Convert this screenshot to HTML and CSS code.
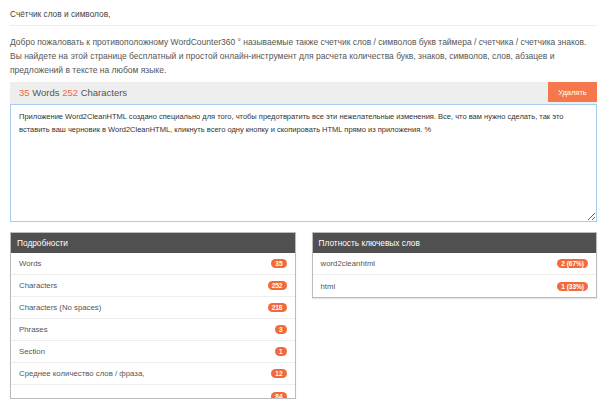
FILE: index.html
```html
<!DOCTYPE html>
<html lang="ru">
<head>
<meta charset="utf-8">
<title>Счётчик слов</title>
<link rel="stylesheet" href="styles.css">
</head>
<body>
<div class="page">
  <h1 class="title">Счётчик слов и символов,</h1>
  <p class="intro">Добро пожаловать к противоположному WordCounter360 ° называемые также счетчик слов / символов букв таймера / счетчика / счетчика знаков. Вы найдете на этой странице бесплатный и простой онлайн-инструмент для расчета количества букв, знаков, символов, слов, абзацев и предложений в тексте на любом языке.</p>
  <div class="bar">
    <div class="count"><span class="num">35</span> Words <span class="num">252</span> Characters</div>
    <button class="clear">Удалять</button>
  </div>
  <textarea class="editor">Приложение Word2CleanHTML создано специально для того, чтобы предотвратить все эти нежелательные изменения. Все, что вам нужно сделать, так это вставить ваш черновик в Word2CleanHTML, кликнуть всего одну кнопку и скопировать HTML прямо из приложения. %</textarea>
  <div class="panels">
    <div class="panel details">
      <div class="panel-head">Подробности</div>
      <ul class="list">
        <li><span>Words</span><span class="badge">35</span></li>
        <li><span>Characters</span><span class="badge">252</span></li>
        <li><span>Characters (No spaces)</span><span class="badge">218</span></li>
        <li><span>Phrases</span><span class="badge">3</span></li>
        <li><span>Section</span><span class="badge">1</span></li>
        <li><span>Среднее количество слов / фраза,</span><span class="badge">12</span></li>
        <li><span></span><span class="badge">84</span></li>
      </ul>
    </div>
    <div class="panel density">
      <div class="panel-head">Плотность ключевых слов</div>
      <ul class="list">
        <li><span>word2cleanhtml</span><span class="badge">2 (67%)</span></li>
        <li><span>html</span><span class="badge">1 (33%)</span></li>
      </ul>
    </div>
  </div>
</div>
</body>
</html>
```
FILE: styles.css
```css
* { box-sizing: border-box; }
html, body { margin: 0; padding: 0; background: #fff; }
body { font-family: "Liberation Sans", Arial, sans-serif; color: #555; }
.page { width: 610px; padding: 0 13px 0 10px; }
.title {
  font-size: 8.3px;
  font-weight: normal;
  color: #444;
  margin: 0;
  padding: 9px 0 6px;
  line-height: 10px;
  border-bottom: 1px solid #eee;
}
.intro {
  font-size: 8.5px;
  line-height: 14px;
  margin: 9px 0 0;
  padding-right: 8px;
  color: #555;
}
.bar {
  margin-top: 5px;
  height: 22px;
  background: #eee;
  display: flex;
  align-items: flex-start;
  justify-content: space-between;
}
.count {
  font-size: 9.5px;
  line-height: 22px;
  padding-left: 9px;
  color: #555;
}
.num { color: #f26a3b; }
.clear {
  border: 0;
  margin: 0;
  height: 20px;
  width: 49px;
  background: #f6774b;
  color: #fff;
  font-family: inherit;
  font-size: 7.5px;
  padding: 0;
}
.editor {
  display: block;
  width: 100%;
  height: 118px;
  margin: 0;
  border: 1px solid #a9ccee;
  padding: 5px 8px;
  font-family: inherit;
  font-size: 7.5px;
  line-height: 13px;
  color: #333;
  resize: vertical;
  outline: none;
}
.panels {
  display: flex;
  gap: 16px;
  margin-top: 10px;
  align-items: flex-start;
}
.panel {
  flex: 1;
  border: 1px solid #bbb;
  box-shadow: 0 1px 1px rgba(0,0,0,0.1);
}
.details { max-height: 167px; overflow: hidden; }
.panel-head {
  background: #505050;
  color: #fff;
  font-size: 8.3px;
  height: 20px;
  line-height: 20px;
  padding-left: 6px;
}
.list { list-style: none; margin: 0; padding: 0; }
.list li {
  height: 22px;
  display: flex;
  align-items: center;
  justify-content: space-between;
  padding: 0 8px;
  border-bottom: 1px solid #eee;
  font-size: 7.8px;
  color: #555;
}
.list li:last-child { border-bottom: 0; }
.badge {
  background: #f26a3b;
  color: #fff;
  font-weight: bold;
  font-size: 6.5px;
  line-height: 9px;
  padding: 0 4px;
  border-radius: 5px;
  min-width: 10px;
  text-align: center;
}
```
